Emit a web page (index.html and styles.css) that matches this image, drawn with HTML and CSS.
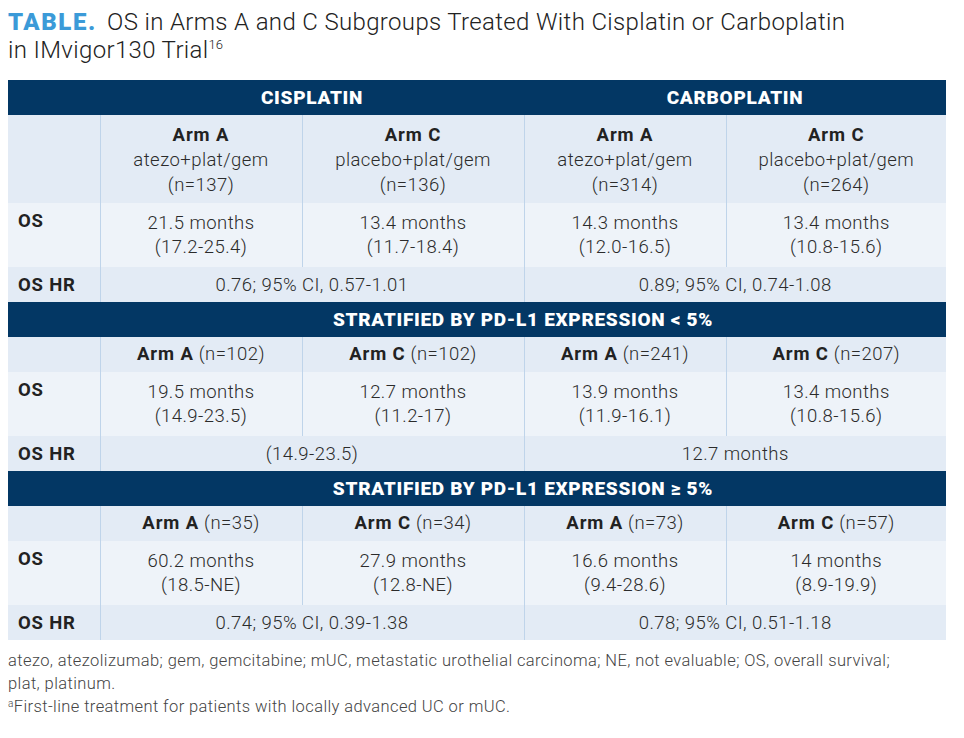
FILE: index.html
```html
<!DOCTYPE html>
<html>
<head>
<meta charset="utf-8">
<link rel="stylesheet" href="styles.css">
</head>
<body>
<h1 class="title"><span class="tag">TABLE.</span> OS in Arms A and C Subgroups Treated With Cisplatin or Carboplatin<br>in IMvigor130 Trial<sup>16</sup></h1>
<table class="data">
  <colgroup>
    <col class="c-label"><col class="c-a1"><col class="c-c1"><col class="c-a2"><col class="c-c2">
  </colgroup>
  <tr class="band">
    <td></td><td colspan="2">CISPLATIN</td><td colspan="2">CARBOPLATIN</td>
  </tr>
  <tr class="arms tall">
    <td></td>
    <td><b>Arm A</b><br>atezo+plat/gem<br>(n=137)</td>
    <td><b>Arm C</b><br>placebo+plat/gem<br>(n=136)</td>
    <td><b>Arm A</b><br>atezo+plat/gem<br>(n=314)</td>
    <td><b>Arm C</b><br>placebo+plat/gem<br>(n=264)</td>
  </tr>
  <tr class="os">
    <th>OS</th>
    <td>21.5 months<br>(17.2-25.4)</td>
    <td>13.4 months<br>(11.7-18.4)</td>
    <td>14.3 months<br>(12.0-16.5)</td>
    <td>13.4 months<br>(10.8-15.6)</td>
  </tr>
  <tr class="hr">
    <th>OS HR</th>
    <td colspan="2">0.76; 95% CI, 0.57-1.01</td>
    <td colspan="2">0.89; 95% CI, 0.74-1.08</td>
  </tr>
  <tr class="band">
    <td></td><td colspan="4">STRATIFIED BY PD-L1 EXPRESSION &lt; 5%</td>
  </tr>
  <tr class="arms">
    <td></td>
    <td><b>Arm A</b> (n=102)</td>
    <td><b>Arm C</b> (n=102)</td>
    <td><b>Arm A</b> (n=241)</td>
    <td><b>Arm C</b> (n=207)</td>
  </tr>
  <tr class="os">
    <th>OS</th>
    <td>19.5 months<br>(14.9-23.5)</td>
    <td>12.7 months<br>(11.2-17)</td>
    <td>13.9 months<br>(11.9-16.1)</td>
    <td>13.4 months<br>(10.8-15.6)</td>
  </tr>
  <tr class="hr">
    <th>OS HR</th>
    <td colspan="2">(14.9-23.5)</td>
    <td colspan="2">12.7 months</td>
  </tr>
  <tr class="band">
    <td></td><td colspan="4">STRATIFIED BY PD-L1 EXPRESSION ≥ 5%</td>
  </tr>
  <tr class="arms">
    <td></td>
    <td><b>Arm A</b> (n=35)</td>
    <td><b>Arm C</b> (n=34)</td>
    <td><b>Arm A</b> (n=73)</td>
    <td><b>Arm C</b> (n=57)</td>
  </tr>
  <tr class="os">
    <th>OS</th>
    <td>60.2 months<br>(18.5-NE)</td>
    <td>27.9 months<br>(12.8-NE)</td>
    <td>16.6 months<br>(9.4-28.6)</td>
    <td>14 months<br>(8.9-19.9)</td>
  </tr>
  <tr class="hr">
    <th>OS HR</th>
    <td colspan="2">0.74; 95% CI, 0.39-1.38</td>
    <td colspan="2">0.78; 95% CI, 0.51-1.18</td>
  </tr>
</table>
<div class="notes">
  <p>atezo, atezolizumab; gem, gemcitabine; mUC, metastatic urothelial carcinoma; NE, not evaluable; OS, overall survival; plat, platinum.</p>
  <p><sup>a</sup>First-line treatment for patients with locally advanced UC or mUC.</p>
</div>
</body>
</html>
```

FILE: styles.css
```css
body {
  margin: 8px;
  font-family: Roboto, "Liberation Sans", sans-serif;
  color: #2b2b2b;
  background: #ffffff;
}
.title {
  margin: 0 0 16px 0;
  font-size: 24px;
  font-weight: 300;
  line-height: 28px;
  color: #222;
  letter-spacing: 0.35px;
}
.title .tag {
  font-weight: 900;
  color: #3b9ad8;
  letter-spacing: 1.6px;
  margin-right: 4px;
}
.title sup {
  font-size: 13px;
  line-height: 0;
  letter-spacing: 0;
}
.data {
  width: 938px;
  border-collapse: collapse;
  table-layout: fixed;
  font-size: 18.5px;
  font-weight: 300;
  letter-spacing: 0.45px;
}
.c-label { width: 92px; }
.c-a1 { width: 202px; }
.c-c1 { width: 222px; }
.c-a2 { width: 202px; }
.c-c2 { width: 220px; }
.data td, .data th {
  padding: 0;
  text-align: center;
  vertical-align: middle;
  border-left: 1px solid #bfd4ea;
}
.data tr > :first-child { border-left: none; }
.data th {
  text-align: left;
  padding-left: 10px;
  font-weight: 700;
  color: #222;
  letter-spacing: 0.8px;
}
.data b { font-weight: 700; color: #222; letter-spacing: 0.9px; }
.band { height: 35px; }
.band td {
  background: #033764;
  color: #ffffff;
  font-weight: 900;
  font-size: 19px;
  letter-spacing: 0.7px;
  border-left: none;
}
.arms { height: 35px; }
.arms.tall { height: 88px; }
.arms td, .arms th {
  background: #e3ebf5;
  line-height: 25px;
}
.arms.tall td { padding-top: 2px; }
.os { height: 64px; }
.os td, .os th {
  background: #eef3f9;
  line-height: 24px;
}
.os th { vertical-align: top; padding-top: 6px; }
.hr { height: 35px; }
.hr td, .hr th {
  background: #e3ebf5;
}
.notes {
  margin-top: 9px;
  font-size: 16.5px;
  font-weight: 300;
  color: #444;
  line-height: 23px;
  letter-spacing: 0.4px;
  width: 900px;
}
.notes p { margin: 0; }
.notes sup {
  font-size: 10px;
  line-height: 0;
  vertical-align: 5px;
}
```
